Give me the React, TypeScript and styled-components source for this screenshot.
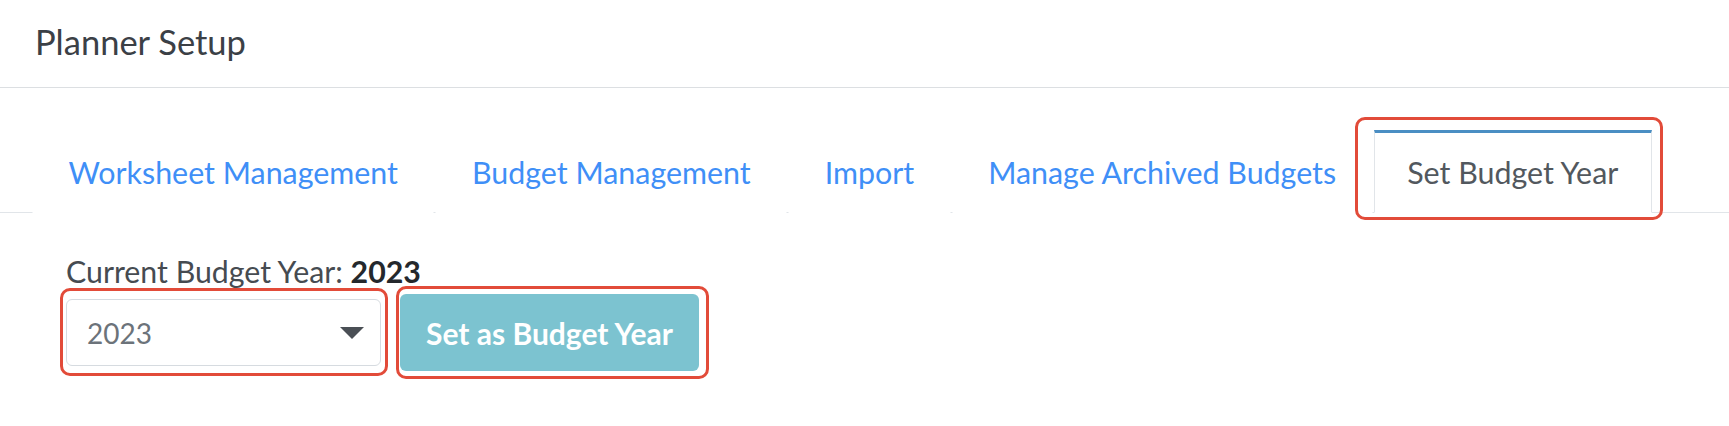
import React from "react";
import styled, { createGlobalStyle } from "styled-components";

const GlobalStyle = createGlobalStyle`
  body {
    margin: 0;
    background: #ffffff;
    font-family: Lato, "Open Sans", sans-serif;
  }
`;

const Page = styled.div`
  width: 100%;
  min-height: 426px;
`;

const Header = styled.div`
  box-sizing: border-box;
  height: 88px;
  padding: 25px 35px 0;
  border-bottom: 1px solid #dcdfe2;
  font-size: 34.5px;
  line-height: 1;
  color: #3b4046;
`;

const TabList = styled.div`
  display: flex;
  align-items: flex-end;
  margin-top: 42px;
  padding-left: 32px;
  border-bottom: 1px solid #e1e5e9;
`;

const Tab = styled.div<{ $active?: boolean }>`
  margin-bottom: -1px;
  margin-right: ${(p) => (p.$active ? "0" : "1px")};
  padding: 23.5px ${(p) => (p.$active ? "32.5px" : "35.5px")} 25px;
  border-top: 3px solid ${(p) => (p.$active ? "#4a8ec3" : "transparent")};
  border-left: 1px solid ${(p) => (p.$active ? "#e1e5e9" : "transparent")};
  border-right: 1px solid ${(p) => (p.$active ? "#e1e5e9" : "transparent")};
  border-bottom: 1px solid #ffffff;
  font-size: 30.4px;
  line-height: 1;
  white-space: nowrap;
  color: ${(p) => (p.$active ? "#52585e" : "#3f8ff7")};
  cursor: pointer;
`;

const Callout = styled.div<{ $t: number; $r: number; $b: number; $l: number }>`
  position: relative;

  &::after {
    content: "";
    position: absolute;
    top: ${(p) => p.$t}px;
    right: ${(p) => p.$r}px;
    bottom: ${(p) => p.$b}px;
    left: ${(p) => p.$l}px;
    border: 3px solid #e24b39;
    border-radius: 10px;
    pointer-events: none;
  }
`;

const Content = styled.div`
  padding: 43px 0 0 66px;
`;

const Label = styled.div`
  font-size: 30.3px;
  line-height: 1;
  color: #464b51;

  b {
    font-weight: 700;
    color: #24282c;
  }
`;

const Controls = styled.div`
  display: flex;
  align-items: center;
  gap: 19px;
  margin-top: 8px;
`;

const SelectBox = styled.div`
  box-sizing: border-box;
  display: flex;
  align-items: center;
  justify-content: space-between;
  width: 315px;
  height: 67px;
  padding: 0 16px 0 20px;
  border: 1px solid #d6dbe0;
  border-radius: 6px;
  background: #ffffff;
  font-size: 28px;
  color: #6c737a;
`;

const Caret = styled.svg`
  width: 24px;
  height: 12px;
  fill: #4a4f55;
`;

const Button = styled.button`
  box-sizing: border-box;
  width: 299px;
  height: 77px;
  border: none;
  border-radius: 6px;
  background: #7cc3d0;
  color: #ffffff;
  font-family: Lato, "Open Sans", sans-serif;
  font-size: 30px;
  font-weight: 700;
  cursor: pointer;
`;

const tabs = ["Worksheet Management", "Budget Management", "Import", "Manage Archived Budgets"];

export default function App() {
  return (
    <Page>
      <GlobalStyle />
      <Header>Planner Setup</Header>
      <TabList>
        {tabs.map((t) => (
          <Tab key={t}>{t}</Tab>
        ))}
        <Callout $t={-13} $r={-11} $b={-8} $l={-19}>
          <Tab $active>Set Budget Year</Tab>
        </Callout>
      </TabList>
      <Content>
        <Label>
          Current Budget Year: <b>2023</b>
        </Label>
        <Controls>
          <Callout $t={-11} $r={-7} $b={-10} $l={-6}>
            <SelectBox>
              <span>2023</span>
              <Caret viewBox="0 0 24 12">
                <path d="M0 0h24L12 12z" />
              </Caret>
            </SelectBox>
          </Callout>
          <Callout $t={-8} $r={-10} $b={-8} $l={-4}>
            <Button>Set as Budget Year</Button>
          </Callout>
        </Controls>
      </Content>
    </Page>
  );
}
